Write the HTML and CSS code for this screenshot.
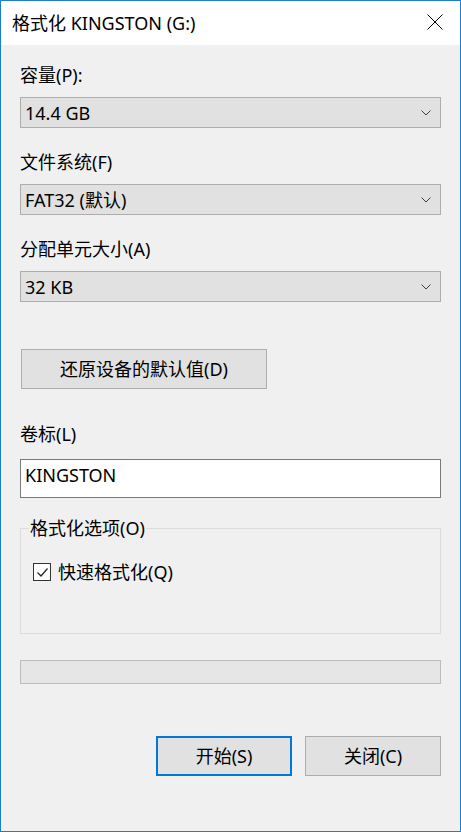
FILE: index.html
```html
<!DOCTYPE html>
<html lang="zh-CN">
<head>
<meta charset="utf-8">
<title>格式化 KINGSTON (G:)</title>
<link rel="stylesheet" href="styles.css">
</head>
<body>
<div class="window">
  <div class="titlebar">
    <span class="title">格式化 KINGSTON (G:)</span>
    <span class="close">
      <svg width="16" height="16" viewBox="0 0 16 16"><path d="M0.5 0.5 L15.5 15.5 M15.5 0.5 L0.5 15.5" stroke="#000" stroke-width="1" fill="none"/></svg>
    </span>
  </div>
  <div class="content">
    <div class="label first">容量(P):</div>
    <div class="combo"><span>14.4 GB</span><svg class="chev" width="10" height="6" viewBox="0 0 10 6"><path d="M0.5 0.5 L5 5 L9.5 0.5" stroke="#404040" stroke-width="1" fill="none"/></svg></div>
    <div class="label">文件系统(F)</div>
    <div class="combo"><span>FAT32 (默认)</span><svg class="chev" width="10" height="6" viewBox="0 0 10 6"><path d="M0.5 0.5 L5 5 L9.5 0.5" stroke="#404040" stroke-width="1" fill="none"/></svg></div>
    <div class="label">分配单元大小(A)</div>
    <div class="combo"><span>32 KB</span><svg class="chev" width="10" height="6" viewBox="0 0 10 6"><path d="M0.5 0.5 L5 5 L9.5 0.5" stroke="#404040" stroke-width="1" fill="none"/></svg></div>
    <div class="btn reset">还原设备的默认值(D)</div>
    <div class="label vol">卷标(L)</div>
    <div class="textbox">KINGSTON</div>
    <fieldset class="group">
      <legend>格式化选项(O)</legend>
      <div class="check-row">
        <span class="checkbox"><svg width="15" height="15" viewBox="0 0 15 15"><path d="M2.5 7.5 L6 11 L12.5 3.5" stroke="#222" stroke-width="1.2" fill="none"/></svg></span>
        <span>快速格式化(Q)</span>
      </div>
    </fieldset>
    <div class="progress"></div>
    <div class="actions">
      <div class="btn primary">开始(S)</div>
      <div class="btn">关闭(C)</div>
    </div>
  </div>
</div>
</body>
</html>
```
FILE: styles.css
```css
* { box-sizing: border-box; }
html, body { margin: 0; padding: 0; }
body {
  width: 461px;
  height: 832px;
  font-family: "Noto Sans", "Noto Sans CJK SC", sans-serif;
  font-size: 18px;
  color: #000;
  background: #f0f0f0;
}
.window {
  width: 461px;
  height: 832px;
  border: 1px solid #1b7fd1;
  display: flex;
  flex-direction: column;
  background: #f0f0f0;
}
.titlebar {
  height: 44px;
  background: #fff;
  display: flex;
  align-items: center;
  justify-content: space-between;
  padding: 0 17px 0 11px;
  flex: none;
}
.title { line-height: 22px; }
.close { display: flex; width: 16px; height: 16px; margin-top: -2px; }
.content {
  flex: 1;
  padding: 0 19px;
  display: flex;
  flex-direction: column;
}
.label {
  line-height: 22px;
  height: 22px;
  margin-top: 23px;
  margin-bottom: 11px;
}
.label.first { margin-top: 19px; }
.combo {
  height: 31px;
  border: 1px solid #adadad;
  background: #e1e1e1;
  display: flex;
  align-items: center;
  justify-content: space-between;
  padding: 0 9px 0 4px;
  line-height: 22px;
}
.chev { display: block; }
.btn {
  height: 40px;
  border: 1px solid #adadad;
  background: #e1e1e1;
  display: flex;
  align-items: center;
  justify-content: center;
  line-height: 22px;
}
.reset {
  width: 246px;
  margin-top: 47px;
  margin-left: 1px;
}
.label.vol { margin-top: 34px; margin-bottom: 14px; }
.textbox {
  height: 39px;
  border: 1px solid #7a7a7a;
  background: #fff;
  padding: 4px 4px 0;
  line-height: 22px;
}
.group {
  margin: 19px 0 0;
  padding: 22px 12px 50px;
  border: 1px solid #dcdcdc;
  min-width: 0;
}
.group legend {
  padding: 0 1px;
  margin-left: -4px;
  line-height: 22px;
}
.check-row {
  display: flex;
  align-items: center;
  gap: 7px;
  line-height: 22px;
}
.checkbox {
  width: 18px;
  height: 18px;
  border: 1px solid #333;
  background: #fff;
  display: flex;
  align-items: center;
  justify-content: center;
}
.checkbox svg { display: block; }
.progress {
  height: 24px;
  margin-top: 26px;
  border: 1px solid #bcbcbc;
  background: #e6e6e6;
}
.actions {
  display: flex;
  justify-content: flex-end;
  gap: 13px;
  margin-top: 52px;
}
.actions .btn { width: 136px; }
.btn.primary { border: 2px solid #0078d7; }
```
